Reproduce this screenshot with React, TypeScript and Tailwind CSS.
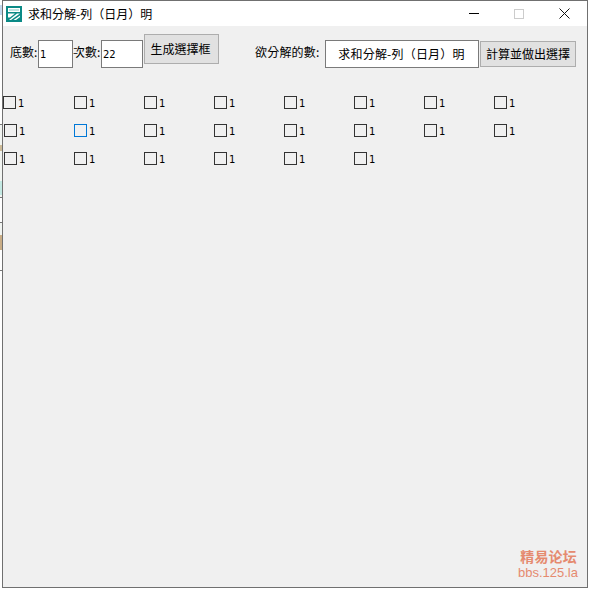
const cjk = "font-['Noto_Sans_CJK_TC','Liberation_Sans',sans-serif]";
const digit = "font-['DejaVu_Sans',sans-serif] text-[10px]";

function Logo() {
  return (
    <svg width="16" height="16" viewBox="0 0 16 16" className="shrink-0">
      <rect x="0" y="0" width="16" height="16" fill="#0b8a86" />
      <rect x="2.5" y="2.5" width="11" height="3" fill="#bfe3e1" stroke="#ffffff" />
      <path d="M2 7.5h7L4 11.5H2zM11 7.5h3L5 14H3zM14 9.5V11l-4 3H7.5z" fill="#ffffff" />
    </svg>
  );
}

function Check({ focus, wide }: { focus?: boolean; wide?: boolean }) {
  return (
    <div className={`flex items-center ${wide ? "w-[71px]" : "w-[70px]"}`}>
      <div className={`h-[13px] w-[13px] border ${focus ? "border-[#0078d7]" : "border-[#333333]"}`} />
      <span className={`ml-[2px] mt-[2px] leading-[13px] text-black ${digit}`}>1</span>
    </div>
  );
}

function CheckRow({ count, focusAt, first }: { count: number; focusAt?: number; first?: boolean }) {
  return (
    <div className={`flex h-[13px] ${first ? "ml-0" : "ml-px"}`}>
      {Array.from({ length: count }).map((_, i) => (
        <Check key={i} focus={i === focusAt} wide={first && i === 0} />
      ))}
    </div>
  );
}

function EdgeStrip() {
  return (
    <div className="flex h-[590px] w-[2px] shrink-0 flex-col">
      <div className="h-[5px]" />
      <div className="h-[10px] bg-[#c5d9ee]" />
      <div className="h-[109px]" />
      <div className="h-px bg-[#777777]" />
      <div className="h-[20px] bg-[#f2f5f2]" />
      <div className="h-[6px] bg-[#cdbb98]" />
      <div className="h-[30px] bg-[#f2f5f2]" />
      <div className="h-[14px] bg-[#c4e9e3]" />
      <div className="h-[2px] bg-[#f2f5f2]" />
      <div className="h-px bg-[#777777]" />
      <div className="h-[24px]" />
      <div className="h-px bg-[#777777]" />
      <div className="h-[12px] bg-[#f2f5f2]" />
      <div className="h-[15px] bg-[#c9ad86]" />
      <div className="h-[20px]" />
      <div className="h-px bg-[#777777]" />
    </div>
  );
}

export default function App() {
  return (
    <div className={`flex h-[590px] w-[590px] overflow-hidden bg-white ${cjk}`}>
      <EdgeStrip />
      <div className="flex h-[588px] w-[586px] flex-col border border-[#707070] bg-[#f0f0f0]">
        <div className="flex h-[25px] shrink-0 items-center bg-white pl-[3px]">
          <Logo />
          <span className="ml-[6px] text-[12px] leading-none text-black">求和分解-列（日月）明</span>
          <div className="ml-auto flex items-center pr-[17px]">
            <div className="h-px w-[10px] bg-black" />
            <div className="ml-[35px] h-[10px] w-[10px] border border-[#cccccc]" />
            <svg width="11" height="11" viewBox="0 0 11 11" className="ml-[35px]">
              <path d="M0.5 0.5l10 10M10.5 0.5l-10 10" stroke="#111111" strokeWidth="1" fill="none" />
            </svg>
          </div>
        </div>

        <div className="flex h-[30px] items-start pl-[7px] pt-[8px] text-[12px] leading-none text-black">
          <span className="mt-[12px] w-[28px]">底數:</span>
          <div className={`mt-[6px] flex h-[28px] w-[35px] items-center border border-[#7a7a7a] bg-white pl-[1px] pt-[2px] ${digit}`}>1</div>
          <span className="mt-[12px] w-[28px]">次數:</span>
          <div className={`mt-[6px] flex h-[28px] w-[42px] items-center border border-[#7a7a7a] bg-white pl-[1px] pt-[2px] ${digit}`}>22</div>
          <div className="ml-px flex h-[30px] w-[75px] items-center justify-center border border-[#adadad] bg-[#e1e1e1] pr-[2px]">生成選擇框</div>
          <span className="ml-[36px] mt-[12px] w-[70px] tracking-[0.2px]">欲分解的數:</span>
          <div className="mt-[6px] flex h-[28px] w-[154px] items-center justify-center border border-[#7a7a7a] bg-white pr-[1px] tracking-[0.2px]">求和分解-列（日月）明</div>
          <div className="ml-px mt-[7px] flex h-[26px] w-[96px] items-center justify-center border border-[#adadad] bg-[#e1e1e1]">計算並做出選擇</div>
        </div>

        <div className="mt-[40px] flex flex-col gap-[15px]">
          <CheckRow count={8} first />
          <CheckRow count={8} focusAt={1} />
          <CheckRow count={6} />
        </div>

        <div className="mt-auto flex flex-col items-end pb-[8px] pr-[9px] font-['Liberation_Sans','Noto_Sans_CJK_SC',sans-serif] text-[#e58a6f]">
          <span className="mb-[2px] pr-px text-[14px] font-bold leading-[14px] tracking-[0.2px]">精易论坛</span>
          <span className="text-[13px] font-medium leading-[13px]">bbs.125.la</span>
        </div>
      </div>
    </div>
  );
}
